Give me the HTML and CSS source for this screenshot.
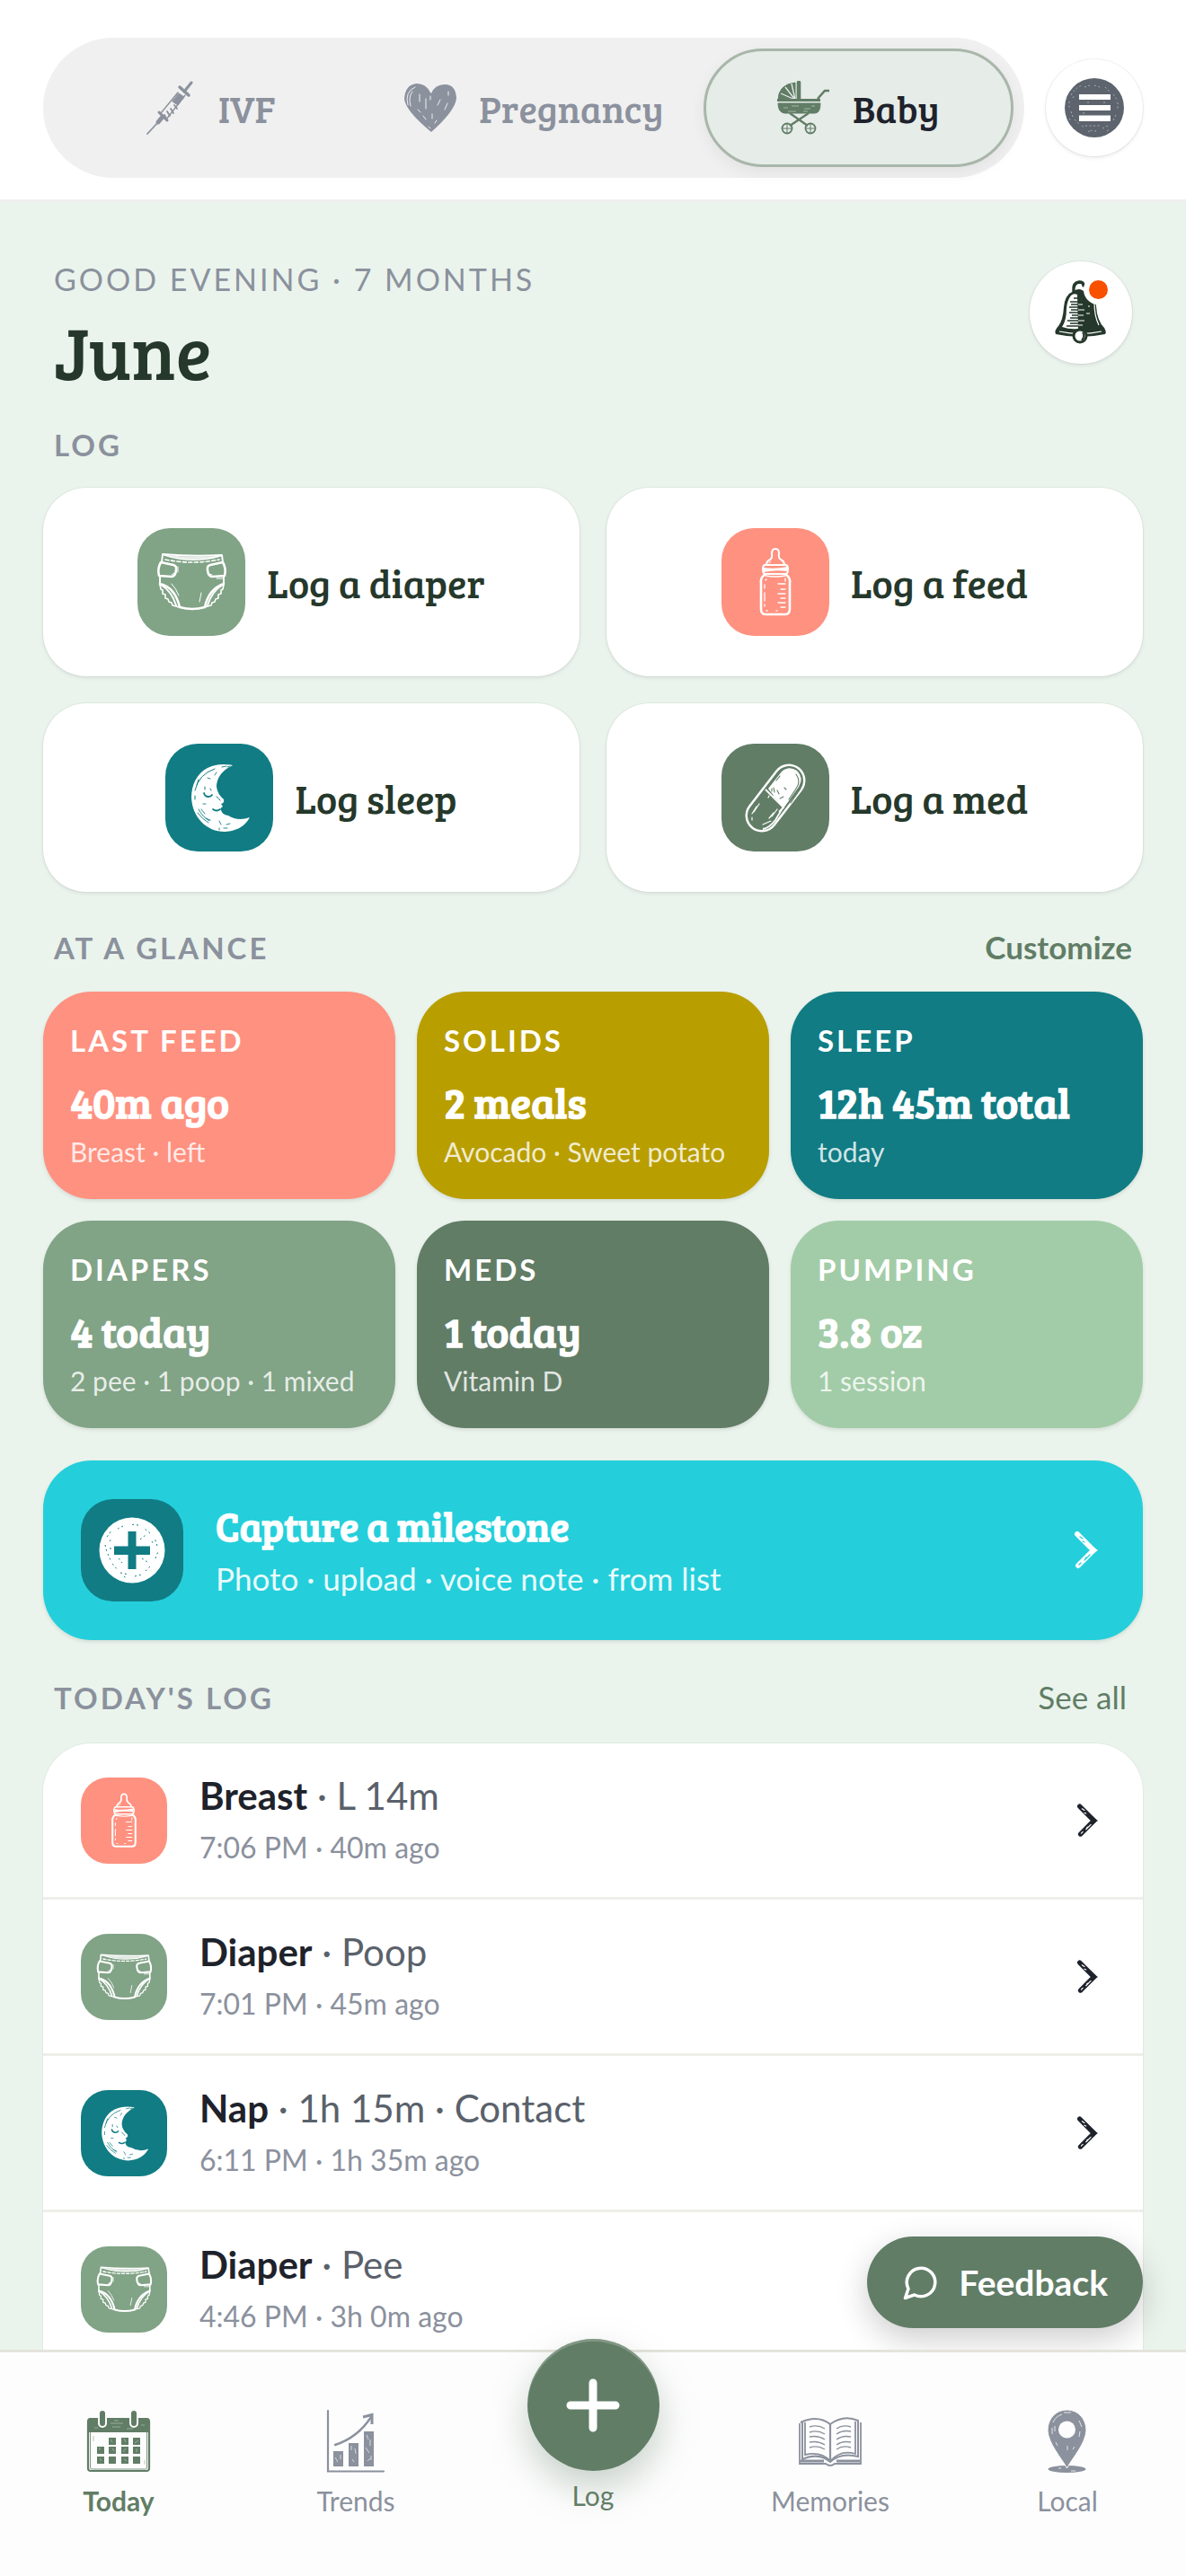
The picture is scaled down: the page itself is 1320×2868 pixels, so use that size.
FILE: index.html
```html
<!DOCTYPE html>
<html lang="en">
<head>
<meta charset="UTF-8" />
<meta name="viewport" content="width=device-width, initial-scale=1" />
<title>June - Today</title>
<link rel="stylesheet" href="styles.css">
</head>
<body>

<!-- shared icons -->
<svg class="sprite" aria-hidden="true">
  <symbol id="i-diaper" viewBox="0 0 120 120">
    <g fill="none" stroke="#fff" stroke-width="2" stroke-linecap="round" stroke-linejoin="round">
      <path d="M27 38L28 29Q61 32 94 30L95 38"/>
      <path d="M30 30Q61 40 92 31" stroke-width="1.6"/>
      <path d="M31 35Q61 41 91 35" stroke-dasharray="4 2.5" stroke-width="1.6"/>
      <path d="M26 38L40 41Q44 42 43 47Q42 54 38 54L24 53Q22 45 26 38z" stroke-width="2.6"/>
      <path d="M95 38L81 41Q77 42 78 47Q79 54 83 54L97 53Q99 45 95 38z" stroke-width="2.6"/>
      <path d="M25 54V62M96 54V62"/>
      <path d="M25 62Q42 66 47 88Q61 92 75 88Q79 68 96 62" stroke-width="2.6"/>
      <path d="M26 63Q38 70 43 86M95 63Q83 70 78 86" stroke-width="2"/>
      <path d="M25 63l1 5 2 1 0 4 3 1 0 4 3 1 1 3 3 1 1 3 4 1 3 1M96 63l-1 5-2 1 0 4-3 1 0 4-3 1-1 3-3 1-1 3-4 1-3 1" stroke-width="1.6"/>
      <path d="M38 62Q43 67 46 75M71 72L69 82M41 50l-3 2M83 52l-3-1M45 43v6M88 56h7" stroke-width="1"/>
    </g>
    <path d="M30 30Q60 33 92 31Q60 39 30 30z" fill="#fff" opacity=".8"/>
  </symbol>
  <symbol id="i-bottle" viewBox="0 0 120 120">
    <g fill="none" stroke="#fff" stroke-width="2" stroke-linecap="round" stroke-linejoin="round">
      <path d="M50 41Q50 37 54 35Q57 33 56 28Q56 23 60 23Q64 23 64 28Q63 33 66 35Q70 37 70 41"/>
      <path d="M53 39l2-2" stroke-width="1"/>
      <path d="M48 41H72Q74 42 74 46Q74 50 72 51H48Q46 50 46 46Q46 42 48 41z"/>
      <path d="M48 52Q43 55 44 62V90Q44 96 49 96H71Q76 96 76 90V62Q77 55 72 52" stroke-width="2.6"/>
      <path d="M49 53Q60 55 71 53" stroke-width="1.4"/>
      <path d="M63 62h8M66 68h5M63 73h8M66 78h5M63 83h8M66 88h5M49 58l1-1M48 63v4M48 72v9M48 85v2M50 92h1M61 92h1M71 56v3" stroke-width="1.3"/>
    </g>
    <path d="M47 44Q60 46 73 43V48Q60 46 47 49z" fill="#fff"/>
  </symbol>
  <symbol id="i-moon" viewBox="0 0 120 120">
    <path d="M75 24Q59 21 47 27C35 33 29 46 29 60C30 82 46 98 66 98Q86 97 94 82Q81 87 70 80Q63 79 62 74Q61 71 64 70L62 67Q66 66 65 62Q58 56 57 48Q57 33 75 24z" fill="#fff"/>
    <g fill="none" stroke="#117c84" stroke-linecap="round">
      <path d="M43 55Q44 59 48 59Q51 59 52 57M53 73Q57 76 61 73" stroke-width="1.8"/>
      <path d="M55 28Q37 34 33 52M33 58V62M37 40L35 46M44 51V48M50 50l1 2M57 59Q60 61 61 63" stroke-width="1"/>
      <path d="M37 73Q41 81 49 86M36 77Q41 84 48 88M40 73l4 5M45 83l5 2M60 86l2 4M68 90l4-1M65 94h4M60 94v2M42 67h3M63 26l5-1M55 35l2-3M47 38l3 1M69 26l3-1" stroke-width=".9"/>
    </g>
  </symbol>
  <symbol id="i-pill" viewBox="0 0 120 120">
    <g fill="none" stroke-linecap="round">
      <path d="M75 41L45 80" stroke="#fff" stroke-width="37"/>
      <path d="M75 41L45 80" stroke="#617d66" stroke-width="32"/>
    </g>
    <path d="M52 50L67 31Q75 24 84 30Q92 38 86 48L69 72z" fill="#fff"/>
    <path d="M49 51L69 71L64 76" fill="none" stroke="#fff" stroke-width="1.8"/>
    <path d="M69 70L60 85Q53 94 46 95" fill="none" stroke="#fff" stroke-width="1.8"/>
    <g stroke="#617d66" stroke-width="1.1" fill="none" stroke-linecap="round">
      <path d="M83 34Q89 42 83 50L75 62M72 27Q78 25 82 28M65 36l-4 5M58 49l1 5M62 52l2 4M65 61l4-2M88 50L77 66M70 49l2 2M56 50v3"/>
    </g>
    <g stroke="#fff" stroke-width="1.2" fill="none" stroke-linecap="round">
      <path d="M52 60l1-2M42 67l-6 9M39 70l-5 8M62 73l-6 8M58 77l-5 6M34 82v3M46 90l9-4M60 60l-2-2"/>
    </g>
  </symbol>
  <symbol id="i-chevron" viewBox="0 0 26 42">
    <path d="M3 3L21 21L4 38" fill="none" stroke="currentColor" stroke-width="6" stroke-linecap="round" stroke-linejoin="round"/>
    <path d="M20 17L26 21L20 25z" fill="currentColor" stroke="none"/>
    <path d="M6 6l3 2M9 11l2 1M17 26l-6 6M7 35l-2 2M12 30l1-1" fill="none" stroke-width="1.3" stroke-linecap="round"/>
  </symbol>
</svg>

<div class="app">
  <header class="topbar">
    <nav class="stages" aria-label="Stage">
      <button class="stage">
        <svg class="stage-icon" viewBox="0 0 60 60" aria-hidden="true" fill="none" stroke="currentColor" stroke-linecap="round">
          <path d="M5 59L17 46" stroke-width="1.8"/>
          <path d="M17 46L22 40" stroke-width="5"/>
          <path d="M18 35L27 44" stroke-width="3"/>
          <path d="M20 36L39 13M26 43L47 16" stroke-width="1.4"/>
          <path d="M40 14L46 18L39 27L33 23z" fill="currentColor" stroke-width="1"/>
          <path d="M31 31l3 5M35 27l3 4M27 34l3 5M24 38l2 4" stroke-width="1.8"/>
          <path d="M41 7L51 16" stroke-width="3.4"/>
          <path d="M46 12L54 2" stroke-width="3"/>
        </svg>
        IVF
      </button>
      <button class="stage">
        <svg class="stage-icon" viewBox="0 0 60 60" aria-hidden="true">
          <path d="M30 13Q25 3 15 3Q2 4 1 20Q2 33 31 57Q58 33 59 19Q58 4 46 4Q35 4 31 14z" fill="currentColor"/>
          <path d="M5 27Q1 12 13 7M8 28Q5 18 10 12M18 15v8M25 20v11M38 27l3-6M46 32l3-7M22 39l3 4M16 32l3 3M32 37v5M50 12v4M28 51l2 2M35 47l2-3M30 17v4" fill="none" stroke="#f0f0f0" stroke-width="1" stroke-linecap="round"/>
        </svg>
        Pregnancy
      </button>
      <button class="stage active" aria-current="true">
        <svg class="stage-icon" viewBox="0 0 60 60" aria-hidden="true" fill="none" stroke="#617d66">
          <path d="M1 22Q1 4 20 2V21H1z" fill="#617d66"/>
          <path d="M20 21L4 14M20 21L9 7M20 21L16 3" stroke="#e6ece8" stroke-width="1.3"/>
          <path d="M24 2V20" stroke-width="4.6" stroke-linecap="round"/>
          <path d="M0 21.5H48" stroke-width="3"/>
          <path d="M1 25H48Q48 36 42 36H8Q1 35 1 25z" fill="#617d66"/>
          <path d="M7 30h5M16 28h8M30 31h7M38 28h4M12 34h9M29 34h5" stroke="#b5c5b8" stroke-width=".8"/>
          <path d="M45 20L53 11H58" stroke-width="2.6"/>
          <path d="M14 36L34 50M35 36L14 50" stroke-width="2.4"/>
          <circle cx="11" cy="53" r="5.5" stroke-width="1.8"/>
          <circle cx="37" cy="53" r="5.5" stroke-width="1.8"/>
          <path d="M11 48v10M6 53h10M37 48v10M32 53h10" stroke-width="1"/>
        </svg>
        Baby
      </button>
    </nav>
    <button class="menu-btn" aria-label="Menu">
      <svg width="68" height="68" viewBox="0 0 68 68" aria-hidden="true">
        <circle cx="34" cy="34" r="33" fill="#5d646e"/>
        <path d="M17 19H52V25H17zM17 31H52V37H17zM17 42.500H52V49H17z" fill="#fff"/>
        <path d="M8 20Q13 11 21 9M6 27v8M8 38l2 6M12 47l5 5M23 11l6-2M34 9l6 2M46 11l5 5M55 19l4 6M60 28v9M58 42l-3 6M49 54l-6 3M36 60l-8-1M22 55l-4-2M24 54h18M10 23l2-3M27 60l3 1M48 60l3-2M6 46l2 3M26 28h2M44 28h2M21 40h3" fill="none" stroke="#a9adb3" stroke-width="1" stroke-dasharray="2 2.500"/>
      </svg>
    </button>
  </header>

  <main>
    <section class="hello">
      <div>
        <p class="greeting">GOOD EVENING · 7 MONTHS</p>
        <h1>June</h1>
      </div>
      <button class="bell-btn" aria-label="Notifications">
        <svg width="60" height="72" viewBox="0 0 60 72" aria-hidden="true">
          <path d="M22 12Q21 3 28 2Q33 2 33 6" fill="none" stroke="#25382b" stroke-width="3.500" stroke-linecap="round"/>
          <path d="M22 12Q28 8 33 12Q46 15 47 29Q48 45 56 53Q59 58 57 60Q29 66 2 60Q0 56 5 51Q10 45 11 30Q12 16 22 12z" fill="#25382b"/>
          <path d="M19 17Q15 22 14 31Q14 45 9 52Q18 55 27 54L26 16Q22 14 19 17z" fill="#fff"/>
          <path d="M18 24h12M19 27h10M17 30h14M19 33h12M17 36h14M20 39h12M18 42h13M15 45h17M18 48h12M14 51h18M22 20h8" stroke="#25382b" stroke-width="1.300" fill="none"/>
          <path d="M6 57Q29 62 53 57M45 25Q45 40 50 50M27 27h5M27 33h7M27 39h6M27 45h7M27 50h5M36 37h4M38 29h2" fill="none" stroke="#fff" stroke-width="1.200"/>
          <circle cx="29" cy="62" r="7" fill="#fff" stroke="#25382b" stroke-width="3"/>
          <path d="M32 58Q35 62 31 67" fill="none" stroke="#25382b" stroke-width="2"/>
        </svg>
        <span class="dot"></span>
      </button>
    </section>

    <h2 class="section-label">LOG</h2>
    <section class="quick-log">
      <button class="quick"><svg class="tile sage" aria-hidden="true"><use href="#i-diaper"/></svg>Log a diaper</button>
      <button class="quick"><svg class="tile coral" aria-hidden="true"><use href="#i-bottle"/></svg>Log a feed</button>
      <button class="quick"><svg class="tile teal" aria-hidden="true"><use href="#i-moon"/></svg>Log sleep</button>
      <button class="quick"><svg class="tile moss" aria-hidden="true"><use href="#i-pill"/></svg>Log a med</button>
    </section>

    <div class="section-head">
      <h2 class="section-label">AT A GLANCE</h2>
      <a class="customize" href="#customize">Customize</a>
    </div>
    <section class="glance">
      <article class="stat coral"><h3>LAST FEED</h3><strong>40m ago</strong><p>Breast · left</p></article>
      <article class="stat mustard"><h3>SOLIDS</h3><strong>2 meals</strong><p>Avocado · Sweet potato</p></article>
      <article class="stat teal"><h3>SLEEP</h3><strong>12h 45m total</strong><p>today</p></article>
      <article class="stat sage"><h3>DIAPERS</h3><strong>4 today</strong><p>2 pee · 1 poop · 1 mixed</p></article>
      <article class="stat moss"><h3>MEDS</h3><strong>1 today</strong><p>Vitamin D</p></article>
      <article class="stat mint"><h3>PUMPING</h3><strong>3.8 oz</strong><p>1 session</p></article>
    </section>

    <button class="milestone">
      <span class="milestone-icon teal">
        <svg width="74" height="74" viewBox="0 0 74 74" aria-hidden="true">
          <circle cx="37" cy="37" r="36.500" fill="#fff"/>
          <path d="M32.500 16H41.500V32.500H57V42H41.500V58H32.500V42H17V32.500H32.500z" fill="#117c84"/>
          <path d="M9 22l6-8M7 31l2 8M10 41l3 7M15 52l6 7M24 62l9 2M40 66l8-2M52 60l7-7M63 46l3-8M65 32l-3-9M57 18l-6-5M44 9l-9-1M27 10l-6 3M12 27l2-3M22 46l4 5M48 46l6 4M46 25l6-5M12 35h2M59 27l2 3M28 66l4 3" fill="none" stroke="#117c84" stroke-width="1" stroke-dasharray="2 3"/>
        </svg>
      </span>
      <span class="milestone-text">
        <strong>Capture a milestone</strong>
        <span>Photo · upload · voice note · from list</span>
      </span>
      <svg class="chevron large" aria-hidden="true"><use href="#i-chevron"/></svg>
    </button>

    <div class="section-head">
      <h2 class="section-label">TODAY'S LOG</h2>
      <a class="see-all" href="#log">See all</a>
    </div>
    <ul class="log-list">
      <li>
        <a class="log-row" href="#breast">
          <svg class="tile small coral" aria-hidden="true"><use href="#i-bottle"/></svg>
          <span class="log-text"><span class="log-title"><b>Breast</b> · L 14m</span><span class="log-time">7:06 PM · 40m ago</span></span>
          <svg class="chevron" aria-hidden="true"><use href="#i-chevron"/></svg>
        </a>
      </li>
      <li>
        <a class="log-row" href="#poop">
          <svg class="tile small sage" aria-hidden="true"><use href="#i-diaper"/></svg>
          <span class="log-text"><span class="log-title"><b>Diaper</b> · Poop</span><span class="log-time">7:01 PM · 45m ago</span></span>
          <svg class="chevron" aria-hidden="true"><use href="#i-chevron"/></svg>
        </a>
      </li>
      <li>
        <a class="log-row" href="#nap">
          <svg class="tile small teal" aria-hidden="true"><use href="#i-moon"/></svg>
          <span class="log-text"><span class="log-title"><b>Nap</b> · 1h 15m · Contact</span><span class="log-time">6:11 PM · 1h 35m ago</span></span>
          <svg class="chevron" aria-hidden="true"><use href="#i-chevron"/></svg>
        </a>
      </li>
      <li>
        <a class="log-row" href="#pee">
          <svg class="tile small sage" aria-hidden="true"><use href="#i-diaper"/></svg>
          <span class="log-text"><span class="log-title"><b>Diaper</b> · Pee</span><span class="log-time">4:46 PM · 3h 0m ago</span></span>
          <svg class="chevron" aria-hidden="true"><use href="#i-chevron"/></svg>
        </a>
      </li>
    </ul>
  </main>

  <div class="dock">
    <button class="feedback">
      <svg width="42" height="42" viewBox="0 0 24 24" fill="none" stroke="#fff" stroke-width="2" stroke-linecap="round" stroke-linejoin="round" aria-hidden="true"><path d="M7.900 20A9 9 0 1 0 4 16.100L2 22Z"/></svg>
      Feedback
    </button>
    <nav class="tabs" aria-label="Main">
      <a class="tab active" href="#today">
        <svg width="72" height="72" viewBox="-1 -2 72 72" fill="none" stroke="currentColor" aria-hidden="true">
          <rect x="1" y="9" width="68" height="58" rx="3" stroke-width="2.200"/>
          <rect x="3.500" y="12" width="63" height="53" rx="2" stroke-width=".8"/>
          <path d="M1 11Q1 8 4 8H66Q69 8 69 11V24H1z" fill="currentColor" stroke="none"/>
          <path d="M17 3V14M52 3V14" stroke="#fdfdfd" stroke-width="10" stroke-linecap="round"/>
          <path d="M17 3V14M52 3V14" stroke-width="6" stroke-linecap="round"/>
          <path d="M26 14h14M28 18h9M8 19h4M44 20h7M60 16h4M30 11h5" stroke="#a8b8aa" stroke-width=".8"/>
          <path d="M24 30h8v8h-8zM38 30h8v8h-8zM51 30h8v8h-8zM11 40h8v8h-8zM24 40h8v8h-8zM38 40h8v8h-8zM51 40h8v8h-8zM11 51h8v8h-8zM24 51h8v8h-8zM38 51h8v8h-8zM51 51h8v8h-8z" fill="currentColor" stroke="none"/>
          <path d="M26 32l2 3M41 31l2 4M53 36l4-3M14 41v3M28 42l2 3M40 46l3-4M55 42v4M14 53l2 3M41 54l3 2M7 28v6M64 55v5" stroke="#a8b8aa" stroke-width=".8"/>
        </svg>
        Today
      </a>
      <a class="tab" href="#trends">
        <svg width="72" height="72" viewBox="-4 -1 72 72" fill="none" stroke="currentColor" aria-hidden="true">
          <path d="M1 1V68.500H63" stroke-width="2.200" stroke-linecap="round"/>
          <path d="M7 46H18V63H7zM24 37H35V63H24zM41 24H52V63H41z" fill="currentColor" stroke="none"/>
          <path d="M9 39Q34 31 49 8" stroke-width="2.400" stroke-linecap="round"/>
          <path d="M40 8L50 5.500V16" stroke-width="3"/>
          <path d="M9 53l3 5M15 50v5M27 40v5M31 43l1 6M44 28l2 5M48 33v7M43 42l4 6M49 51v5M28 55l2 3M45 57l3-3" stroke="#d5d8dc" stroke-width="1"/>
        </svg>
        Trends
      </a>
      <a class="tab log-tab" href="#log">
        <span class="fab">
          <svg width="60" height="60" viewBox="0 0 60 60" aria-hidden="true"><path d="M30 5V55M5 30H55" stroke="#fff" stroke-width="9" stroke-linecap="round"/></svg>
        </span>
        Log
      </a>
      <a class="tab" href="#memories">
        <svg width="72" height="72" viewBox="-1 -9 72 72" fill="none" stroke="currentColor" stroke-width="1.800" aria-hidden="true">
          <path d="M1 7V52H30Q35 56 40 52H69V6"/>
          <path d="M2 6Q21 -3 35 8Q50 -3 66 4V44Q47 39 35 50Q23 39 4 47V6" stroke-width="2"/>
          <path d="M35 8V49" stroke-width="2.200"/>
          <path d="M7 6V42Q25 38 35 49Q47 36 63 41V5"/>
          <path d="M2 49H28M42 49H68" stroke-width="3"/>
          <path d="M12 11Q21 8 29 13M12 17Q21 14 29 19M12 22Q21 20 29 25M12 28Q21 26 29 31M12 34Q21 31 29 36M42 13Q49 8 58 11M42 19Q49 14 58 16M42 25Q49 20 58 22M42 31Q49 26 58 28M42 36Q49 31 58 34" stroke-width="1.400"/>
        </svg>
        Memories
      </a>
      <a class="tab" href="#local">
        <svg width="72" height="72" viewBox="-14 -1 72 72" aria-hidden="true">
          <ellipse cx="21.500" cy="66" rx="21" ry="4" fill="currentColor"/>
          <path d="M21.500 0C9 0 0 10 0 23C1 38 15 53 21.500 65C28 53 42 38 43 23C43 10 34 0 21.500 0z" fill="currentColor" stroke="#fdfdfd" stroke-width="1"/>
          <circle cx="21.500" cy="22" r="9.500" fill="#fdfdfd"/>
          <path d="M6 14Q9 7 16 5M5 20v7M8 18v6M35 12l3 7M36 24l-1 6M18 3h8M9 36l2 4M22 40v5M28 44l2-3M12 65h3M26 68h5" fill="none" stroke="#e2e4e7" stroke-width="1"/>
        </svg>
        Local
      </a>
    </nav>
  </div>
</div>

</body>
</html>
```

FILE: styles.css
```css
* {
  box-sizing: border-box;
}
body {
  margin: 0;
  font-family: Lato, "Liberation Sans", sans-serif;
  background: #eaf4ec;
  color: #1e222b;
}
h1, h2, h3, p, ul {
  margin: 0;
  padding: 0;
}
button {
  font: inherit;
  color: inherit;
  border: none;
  background: none;
  padding: 0;
  cursor: pointer;
}
a {
  color: inherit;
  text-decoration: none;
}
svg {
  display: block;
  flex-shrink: 0;
}
.sprite {
  position: absolute;
  width: 0;
  height: 0;
}
.app {
  display: flex;
  flex-direction: column;
  height: 100vh;
}

/* colours */
.sage { background: #81a386; }
.coral { background: #ff9180; }
.teal { background: #117c84; }
.moss { background: #617d66; }
.mustard { background: #b99e00; }
.mint { background: #a2cca7; }

/* top bar */
.topbar {
  display: flex;
  align-items: center;
  gap: 24px;
  padding: 42px 48px 24px;
  background: #fff;
  border-bottom: 3px solid #eeefee;
}
.stages {
  flex: 1;
  display: grid;
  grid-template-columns: repeat(3, 1fr);
  gap: 16px;
  padding: 12px;
  border-radius: 78px;
  background: #f0f0f0;
}
.stage {
  display: flex;
  align-items: center;
  justify-content: center;
  gap: 24px;
  height: 132px;
  border-radius: 66px;
  font-family: "Bree Serif", "DejaVu Serif Condensed", "DejaVu Serif", serif;
  font-size: 42px;
  color: #8b919d;
}
.stage-icon {
  width: 60px;
  height: 60px;
}
.stage.active {
  background: #e6ece8;
  border: 3px solid #a9b6aa;
  color: #1e222b;
  box-shadow: 0 6px 18px rgba(0, 0, 0, 0.06);
}
.menu-btn, .bell-btn {
  display: grid;
  place-items: center;
  border-radius: 50%;
  background: #fff;
  box-shadow: 0 0 0 1px rgba(0, 0, 0, 0.05), 0 2px 4px rgba(0, 0, 0, 0.08);
}
.menu-btn {
  width: 108px;
  height: 108px;
}
.bell-btn {
  position: relative;
  width: 114px;
  height: 114px;
}
.dot {
  position: absolute;
  top: 15px;
  right: 21px;
  width: 33px;
  height: 33px;
  border: 6px solid #fff;
  border-radius: 50%;
  background: #f95000;
}

/* page */
main {
  flex: 1;
  min-height: 0;
  overflow-y: auto;
  scrollbar-width: none;
  padding: 66px 48px 0;
}
.hello {
  display: flex;
  justify-content: space-between;
  align-items: flex-start;
  padding: 0 12px;
}
.greeting {
  font-size: 34px;
  line-height: 40px;
  letter-spacing: 3px;
  color: #8b919d;
}
h1 {
  font-family: "Bree Serif", "DejaVu Serif Condensed", "DejaVu Serif", serif;
  font-size: 82px;
  font-weight: 400;
  line-height: 96px;
  margin-top: 12px;
  color: #25382b;
}
.section-label {
  font-size: 33px;
  line-height: 40px;
  letter-spacing: 3px;
  font-weight: 700;
  color: #8b919d;
}
.hello + .section-label {
  margin: 36px 12px 28px;
}
.section-head {
  display: flex;
  justify-content: space-between;
  align-items: center;
  padding: 40px 12px 28px;
}
.milestone + .section-head {
  padding: 42px 12px 30px;
}
.customize, .see-all {
  font-size: 35px;
  line-height: 43px;
  color: #617d66;
}
.customize {
  font-weight: 700;
}
.see-all {
  padding-right: 6px;
}

/* quick log */
.quick-log {
  display: grid;
  grid-template-columns: 1fr 1fr;
  gap: 30px;
}
.quick {
  display: flex;
  align-items: center;
  justify-content: center;
  gap: 24px;
  padding: 45px 24px;
  border-radius: 48px;
  background: #fff;
  box-shadow: 0 0 0 1px rgba(0, 0, 0, 0.04), 0 2px 4px rgba(0, 0, 0, 0.08);
  font-family: "Bree Serif", "DejaVu Serif Condensed", "DejaVu Serif", serif;
  font-size: 44px;
  color: #25382b;
}
.tile {
  width: 120px;
  height: 120px;
  border-radius: 36px;
}
.tile.small {
  width: 96px;
  height: 96px;
  border-radius: 30px;
}

/* at a glance */
.glance {
  display: grid;
  grid-template-columns: repeat(3, 1fr);
  gap: 24px;
}
.stat {
  padding: 34px 30px 35px;
  border-radius: 54px;
  color: #fff;
  box-shadow: 0 2px 4px rgba(0, 0, 0, 0.1);
}
.stat h3 {
  font-size: 33px;
  line-height: 40px;
  letter-spacing: 3px;
}
.stat strong {
  display: block;
  margin-top: 20px;
  font-family: "Bree Serif", "DejaVu Serif Condensed", "DejaVu Serif", serif;
  font-size: 47px;
  line-height: 56px;
  white-space: nowrap;
}
.stat p {
  margin-top: 10px;
  font-size: 30px;
  line-height: 36px;
  color: rgba(255, 255, 255, 0.82);
}

/* milestone */
.milestone {
  display: flex;
  align-items: center;
  gap: 36px;
  width: 100%;
  margin-top: 36px;
  padding: 42px;
  border-radius: 54px;
  background: #24cfdb;
  color: #fff;
  text-align: left;
  box-shadow: 0 2px 4px rgba(0, 0, 0, 0.1);
}
.milestone-icon {
  display: grid;
  place-items: center;
  width: 114px;
  height: 114px;
  border-radius: 36px;
}
.milestone-text {
  flex: 1;
  display: flex;
  flex-direction: column;
  gap: 4px;
  padding-top: 4px;
}
.milestone-text strong {
  font-family: "Bree Serif", "DejaVu Serif Condensed", "DejaVu Serif", serif;
  font-size: 44px;
  line-height: 54px;
}
.milestone-text span {
  font-size: 35px;
  line-height: 54px;
  color: rgba(255, 255, 255, 0.92);
}
.chevron {
  width: 23px;
  height: 38px;
  margin-right: 8px;
  stroke: #fff;
}
.chevron.large {
  width: 26px;
  height: 42px;
  stroke: #24cfdb;
}

/* today's log */
.log-list {
  list-style: none;
  padding-bottom: 60px;
  border-radius: 54px;
  background: #fff;
  box-shadow: 0 0 0 1px rgba(0, 0, 0, 0.04);
}
.log-row {
  display: flex;
  align-items: center;
  gap: 36px;
  padding: 36px 42px;
}
.log-list li + li {
  border-top: 3px solid #efefe9;
}
.log-text {
  flex: 1;
  display: flex;
  flex-direction: column;
  gap: 15px;
}
.log-title {
  font-size: 42px;
  line-height: 45px;
  color: #5a616b;
}
.log-title b {
  color: #1e222b;
}
.log-time {
  font-size: 32px;
  line-height: 39px;
  color: #8b919d;
}

/* bottom dock */
.dock {
  position: relative;
  background: #fff;
}
.feedback {
  position: absolute;
  right: 48px;
  bottom: calc(100% + 24px);
  display: flex;
  align-items: center;
  gap: 21px;
  padding: 27px 39px;
  border-radius: 51px;
  background: #617d66;
  color: #fff;
  font-size: 39px;
  line-height: 48px;
  font-weight: 700;
  box-shadow: 0 12px 36px rgba(0, 0, 0, 0.2);
}
.tabs {
  position: relative;
  display: grid;
  grid-template-columns: repeat(5, 1fr);
  height: 252px;
  padding-top: 63px;
  border-top: 3px solid #e4e3dc;
  background: rgba(253, 253, 253, 0.8);
}
.tab {
  display: flex;
  flex-direction: column;
  align-items: center;
  gap: 12px;
  font-size: 30px;
  line-height: 36px;
  color: #8b919d;
}
.tab.active {
  font-weight: 700;
  color: #617d66;
}
.log-tab {
  gap: 9px;
  margin-top: -78px;
  color: #617d66;
}
.fab {
  display: grid;
  place-items: center;
  width: 147px;
  height: 147px;
  border-radius: 50%;
  background: #617d66;
  box-shadow: 0 18px 42px rgba(97, 125, 102, 0.35), inset 0 3px 0 rgba(255, 255, 255, 0.2);
}
```
